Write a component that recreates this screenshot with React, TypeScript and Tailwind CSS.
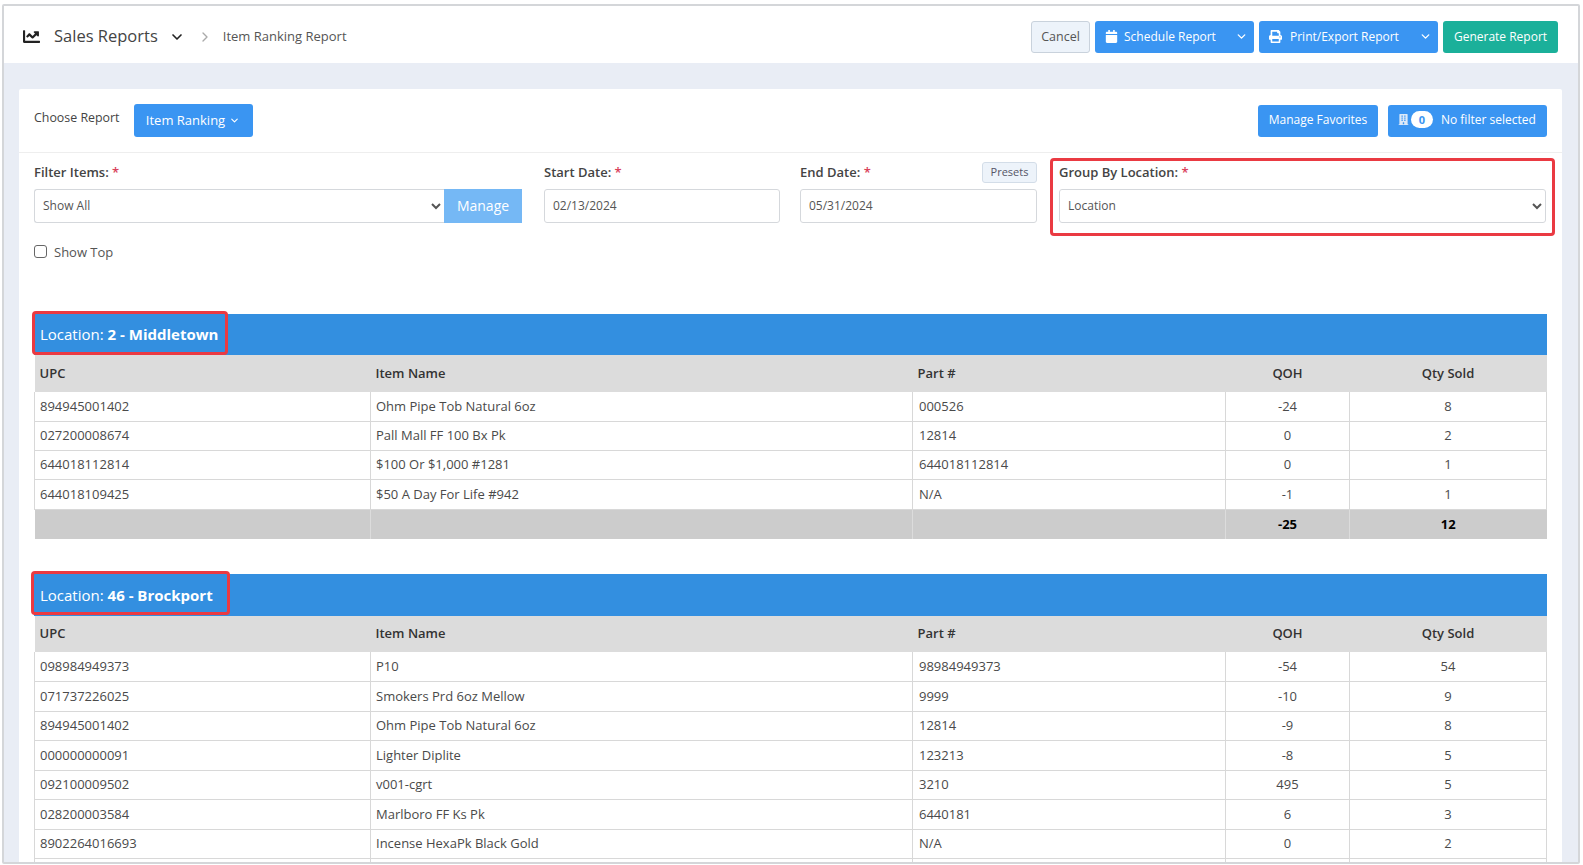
import { ChevronDown, ChevronRight } from "lucide-react";
import { FaBuilding, FaCalendar, FaChartLine, FaPrint } from "react-icons/fa";

type Row = [string, string, string, string, string];

const middletown: Row[] = [
  ["894945001402", "Ohm Pipe Tob Natural 6oz", "000526", "-24", "8"],
  ["027200008674", "Pall Mall FF 100 Bx Pk", "12814", "0", "2"],
  ["644018112814", "$100 Or $1,000 #1281", "644018112814", "0", "1"],
  ["644018109425", "$50 A Day For Life #942", "N/A", "-1", "1"],
];

const brockport: Row[] = [
  ["098984949373", "P10", "98984949373", "-54", "54"],
  ["071737226025", "Smokers Prd 6oz Mellow", "9999", "-10", "9"],
  ["894945001402", "Ohm Pipe Tob Natural 6oz", "12814", "-9", "8"],
  ["000000000091", "Lighter Diplite", "123213", "-8", "5"],
  ["092100009502", "v001-cgrt", "3210", "495", "5"],
  ["028200003584", "Marlboro FF Ks Pk", "6440181", "6", "3"],
  ["8902264016693", "Incense HexaPk Black Gold", "N/A", "0", "2"],
  ["", "", "", "", ""],
];

function Required() {
  return <span className="text-[#d9415a]"> *</span>;
}

function SplitButton({ icon, label, className }: { icon: React.ReactNode; label: React.ReactNode; className: string }) {
  return (
    <button className={`flex items-center h-8 pl-[10px] pr-[6px] rounded-[3px] bg-[#3a95f2] text-white text-[12px] ${className}`}>
      {icon}
      {label}
      <ChevronDown className="ml-auto" size={13} strokeWidth={2.5} />
    </button>
  );
}

function ReportTable({ label, name, rows, total, boxClass, barClass, headClass, rowClass }: { label: string; name: string; rows: Row[]; total?: [string, string]; boxClass: string; barClass: string; headClass: string; rowClass: string }) {
  return (
    <div className="relative">
      <div className={`flex items-center pl-[6px] bg-[#338fe0] text-white text-[15px] ${barClass}`}>
        <span>
          {label} <b className="font-bold">{name}</b>
        </span>
      </div>
      <div className={`absolute h-[44px] border-[3px] border-[#ea3a42] rounded-[4px] ${boxClass}`} />
      <table className="w-full table-fixed border-collapse text-[13px] text-[#4a4a4a]">
        <colgroup>
          <col className="w-[336px]" />
          <col className="w-[542px]" />
          <col className="w-[313px]" />
          <col className="w-[124px]" />
          <col />
        </colgroup>
        <thead>
          <tr className={`bg-[#dcdcdc] text-[#333] font-semibold ${headClass}`}>
            <th className="text-left font-semibold pl-[5px]">UPC</th>
            <th className="text-left font-semibold pl-[5px]">Item Name</th>
            <th className="text-left font-semibold pl-[5px]">Part #</th>
            <th className="font-semibold">QOH</th>
            <th className="font-semibold">Qty Sold</th>
          </tr>
        </thead>
        <tbody>
          {rows.map((r, i) => (
            <tr key={i} className={`border-b border-[#d8d8d8] ${rowClass}`}>
              <td className="pl-[5px] border-l border-[#d8d8d8]">{r[0]}</td>
              <td className="pl-[5px] border-l border-[#d8d8d8]">{r[1]}</td>
              <td className="pl-[6px] border-l border-[#d8d8d8]">{r[2]}</td>
              <td className="text-center border-l border-[#d8d8d8]">{r[3]}</td>
              <td className="text-center border-x border-[#d8d8d8]">{r[4]}</td>
            </tr>
          ))}
          {total && (
            <tr className="h-[30px] bg-[#cccccc] text-black font-bold">
              <td />
              <td className="border-l border-[#dcdcdc]" />
              <td className="border-l border-[#dcdcdc]" />
              <td className="text-center border-l border-[#dcdcdc]">{total[0]}</td>
              <td className="text-center border-l border-[#dcdcdc]">{total[1]}</td>
            </tr>
          )}
        </tbody>
      </table>
    </div>
  );
}

export default function App() {
  return (
    <div className="h-[865px] overflow-hidden bg-white pt-1 pl-[2px] pr-[3px] pb-[1px] font-['Open_Sans',sans-serif] text-[#444]">
      <div className="h-full flex flex-col overflow-hidden border-2 border-[#d4d6d9] rounded-[2px] bg-[#e9edf5]">
        {/* Header */}
        <header className="h-[57px] shrink-0 flex items-center bg-white pt-1 pl-[19px] pr-[20px]">
          <FaChartLine size={17} className="text-[#222]" />
          <h1 className="ml-[14px] -mt-px text-[16.5px] text-[#444]">Sales Reports</h1>
          <ChevronDown className="ml-[11px] text-[#222]" size={16} strokeWidth={2.5} />
          <ChevronRight className="ml-[12px] text-[#aaa]" size={16} />
          <span className="ml-[10px] text-[13px] text-[#555]">Item Ranking Report</span>
          <div className="ml-auto flex items-center gap-[5px]">
            <button className="h-8 w-[59px] pt-px rounded-[3px] border border-[#c9d2dc] bg-[#edf3fa] text-[12.5px] text-[#555]">Cancel</button>
            <SplitButton
              icon={<FaCalendar size={13} />}
              label={<span className="ml-[6px]">Schedule Report</span>}
              className="w-[159px]"
            />
            <SplitButton
              icon={<FaPrint size={13} />}
              label={<span className="ml-[8px]">Print/Export Report</span>}
              className="w-[179px]"
            />
            <button className="h-8 w-[115px] rounded-[3px] bg-[#1bb09a] text-white text-[12px]">Generate Report</button>
          </div>
        </header>

        {/* Report card */}
        <main className="flex-1 min-h-0 mt-[26px] ml-[15px] mr-[16px] bg-white rounded-t-[2px] overflow-hidden">
          <div className="h-[64px] flex items-center px-[15px] border-b border-[#eeeeee]">
            <span className="text-[12.4px] text-[#444] -mt-1">Choose Report</span>
            <button className="ml-[14px] h-[33px] w-[119px] flex items-center justify-center gap-1 rounded-[3px] bg-[#3a95f2] text-white text-[13px]">
              Item Ranking <ChevronDown size={11} strokeWidth={2.5} />
            </button>
            <button className="ml-auto h-8 w-[120px] pb-[2px] rounded-[3px] bg-[#3a95f2] text-white text-[12px]">Manage Favorites</button>
            <button className="ml-[10px] h-8 w-[159px] pb-[2px] flex items-center pl-[10px] rounded-[3px] bg-[#3a95f2] text-white text-[12px]">
              <FaBuilding size={11} className="text-[#dce9f8]" />
              <span className="ml-[2px] mr-2 w-[22px] h-[17px] rounded-full bg-white text-[#3a95f2] text-[11px] font-bold leading-[17px]">0</span>
              No filter selected
            </button>
          </div>

          <div className="flex px-[15px] pt-[10px] h-[161px]">
            <div className="w-[488px]">
              <label className="block h-[26px] text-[13px] font-semibold leading-[18px]">Filter Items:<Required /></label>
              <div className="flex h-[34px]">
                <select className="flex-1 min-w-0 pl-1 pb-[2px] rounded-l-[3px] border border-[#d5d8dc] border-r-0 bg-white text-[12px] text-[#555]">
                  <option>Show All</option>
                </select>
                <button className="w-[78px] pb-[2px] bg-[#75b8f5] text-white text-[14px]">Manage</button>
              </div>
              <label className="mt-[20px] flex items-center gap-[7px] text-[13px] text-[#555]">
                <input type="checkbox" className="appearance-none -mt-[2px] size-[13px] rounded-[3px] border border-[#666] bg-white" />
                Show Top
              </label>
            </div>
            <div className="ml-[22px] w-[236px]">
              <label className="block h-[26px] text-[13px] font-semibold leading-[18px]">Start Date:<Required /></label>
              <input readOnly value="02/13/2024" className="w-full h-[34px] pl-2 pb-[2px] rounded-[3px] border border-[#d5d8dc] text-[12px] text-[#555]" />
            </div>
            <div className="ml-[20px] w-[237px]">
              <div className="flex justify-between h-[26px]">
                <label className="text-[13px] font-semibold leading-[18px]">End Date:<Required /></label>
                <button className="h-[21px] w-[55px] -mt-[1px] rounded-[3px] border border-[#d3dde8] bg-[#edf3fa] text-[11px] text-[#556]">Presets</button>
              </div>
              <input readOnly value="05/31/2024" className="w-full h-[34px] pl-2 pb-[2px] rounded-[3px] border border-[#d5d8dc] text-[12px] text-[#555]" />
            </div>
            <div className="relative ml-[22px] w-[487px]">
              <label className="block h-[26px] text-[13px] font-semibold leading-[18px]">Group By Location:<Required /></label>
              <select className="w-full h-[34px] pl-1 pb-[2px] rounded-[3px] border border-[#d5d8dc] bg-white text-[12px] text-[#555]">
                <option>Location</option>
              </select>
              <div className="absolute -left-[9px] -right-[9px] -top-[5px] h-[78px] border-[3px] border-[#ea3a42] rounded-[4px]" />
            </div>
          </div>

          <div className="px-[15px] flex flex-col gap-[35px]">
            <ReportTable
              label="Location:"
              name="2 - Middletown"
              rows={middletown}
              total={["-25", "12"]}
              boxClass="-left-[2px] -top-[3px] w-[196px]"
              barClass="h-[41px]"
              headClass="h-[37px]"
              rowClass="h-[29.25px]"
            />
            <ReportTable
              label="Location:"
              name="46 - Brockport"
              rows={brockport}
              boxClass="-left-[3px] -top-[3px] w-[199px]"
              barClass="h-[42px]"
              headClass="h-[36px]"
              rowClass="h-[29.5px]"
            />
          </div>
        </main>
      </div>
    </div>
  );
}
